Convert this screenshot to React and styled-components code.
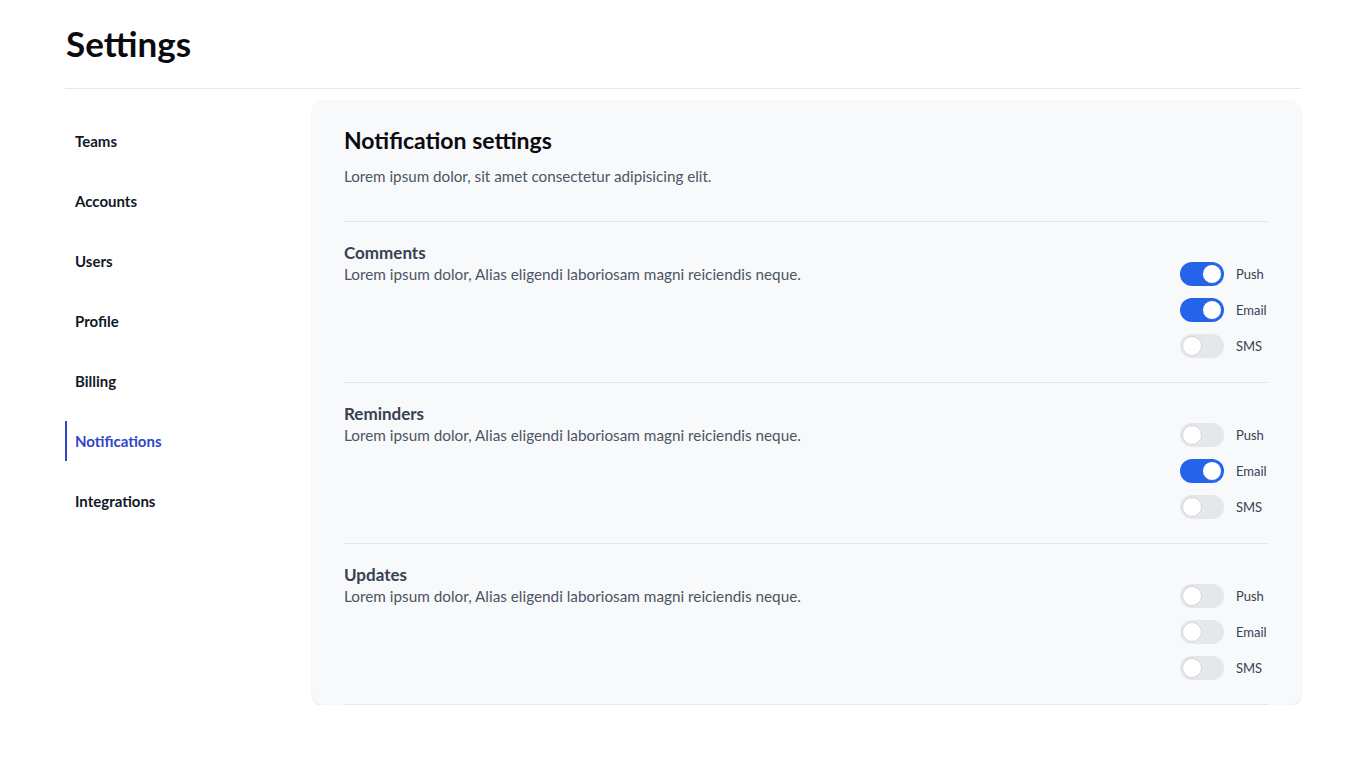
import React, { useState } from "react";
import styled, { createGlobalStyle } from "styled-components";

const GlobalStyle = createGlobalStyle`
  html, body { margin: 0; padding: 0; background: #ffffff; }
  body { font-family: Lato, "Noto Sans", sans-serif; color: #111827; }
  * { box-sizing: border-box; }
`;

const Page = styled.div`
  padding: 0 65px;
`;

const Header = styled.header`
  padding: 19px 0 21px;
  border-bottom: 1px solid #e5e7eb;
`;

const Title = styled.h1`
  margin: 0 0 0 1px;
  font-size: 35px;
  line-height: 48px;
  font-weight: 700;
  color: #0b0b0f;
`;

const Body = styled.div`
  display: grid;
  grid-template-columns: 247px 1fr;
  padding-top: 11px;
`;

const Nav = styled.nav`
  display: flex;
  flex-direction: column;
  gap: 20px;
  padding-top: 21px;
`;

const NavItem = styled.a`
  display: flex;
  align-items: center;
  height: 40px;
  padding-left: 8px;
  font-size: 15px;
  font-weight: 700;
  color: ${(p) => (p.$active ? "#3046c5" : "#111827")};
  border-left: 2px solid ${(p) => (p.$active ? "#3046c5" : "transparent")};
  text-decoration: none;
  cursor: pointer;
`;

const Card = styled.section`
  background: #f8f9fb;
  border-radius: 12px;
  box-shadow: 0 1px 2px rgba(0, 0, 0, 0.12);
  padding: 24px 32px 0;
  overflow: hidden;
`;

const CardHead = styled.div`
  padding-bottom: 33px;
`;

const CardTitle = styled.h2`
  margin: 0;
  font-size: 23px;
  line-height: 32px;
  font-weight: 700;
  color: #0b0b0f;
`;

const CardDesc = styled.p`
  margin: 8px 0 0;
  font-size: 15.2px;
  line-height: 24px;
  color: #4b5563;
`;

const Section = styled.div`
  border-top: 1px solid #e5e7eb;
  padding: 22px 0 24px;
  &:last-child {
    border-bottom: 1px solid #e5e7eb;
  }
`;

const SectionTitle = styled.h3`
  margin: 0;
  font-size: 17px;
  line-height: 18px;
  font-weight: 700;
  color: #374151;
`;

const SectionRow = styled.div`
  display: flex;
  justify-content: space-between;
  align-items: flex-start;
`;

const SectionDesc = styled.p`
  margin: 2px 0 0;
  font-size: 15.3px;
  line-height: 20px;
  color: #4b5563;
`;

const Toggles = styled.div`
  display: flex;
  flex-direction: column;
  gap: 12px;
  width: 89px;
`;

const ToggleRow = styled.label`
  display: flex;
  align-items: center;
  gap: 12px;
  cursor: pointer;
`;

const Track = styled.span`
  position: relative;
  width: 44px;
  height: 24px;
  border-radius: 12px;
  background: ${(p) => (p.$on ? "#2563eb" : "#e5e7eb")};
  flex-shrink: 0;
`;

const Knob = styled.span`
  position: absolute;
  top: 2px;
  left: ${(p) => (p.$on ? "22px" : "2px")};
  width: 20px;
  height: 20px;
  border-radius: 50%;
  background: #ffffff;
  border: 1px solid ${(p) => (p.$on ? "#2563eb" : "#d1d5db")};
`;

const ToggleLabel = styled.span`
  font-size: 13px;
  color: #374151;
`;

function Toggle({ label, initial }) {
  const [on, setOn] = useState(initial);
  return (
    <ToggleRow onClick={() => setOn(!on)}>
      <Track $on={on}>
        <Knob $on={on} />
      </Track>
      <ToggleLabel>{label}</ToggleLabel>
    </ToggleRow>
  );
}

const navItems = ["Teams", "Accounts", "Users", "Profile", "Billing", "Notifications", "Integrations"];

const sections = [
  { title: "Comments", values: [true, true, false] },
  { title: "Reminders", values: [false, true, false] },
  { title: "Updates", values: [false, false, false] },
];

const channels = ["Push", "Email", "SMS"];

export default function App() {
  return (
    <>
      <GlobalStyle />
      <Page>
        <Header>
          <Title>Settings</Title>
        </Header>
        <Body>
          <Nav>
            {navItems.map((n) => (
              <NavItem key={n} $active={n === "Notifications"}>
                {n}
              </NavItem>
            ))}
          </Nav>
          <Card>
            <CardHead>
              <CardTitle>Notification settings</CardTitle>
              <CardDesc>Lorem ipsum dolor, sit amet consectetur adipisicing elit.</CardDesc>
            </CardHead>
            {sections.map((s) => (
              <Section key={s.title}>
                <SectionTitle>{s.title}</SectionTitle>
                <SectionRow>
                  <SectionDesc>Lorem ipsum dolor, Alias eligendi laboriosam magni reiciendis neque.</SectionDesc>
                  <Toggles>
                    {channels.map((c, i) => (
                      <Toggle key={c} label={c} initial={s.values[i]} />
                    ))}
                  </Toggles>
                </SectionRow>
              </Section>
            ))}
          </Card>
        </Body>
      </Page>
    </>
  );
}
